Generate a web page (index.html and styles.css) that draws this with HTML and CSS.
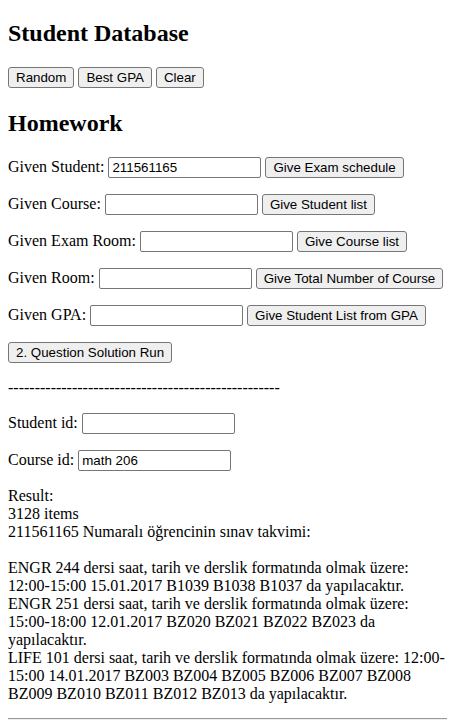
FILE: index.html
```html
<!DOCTYPE html>
<html>
<head>
<meta charset="utf-8">
<title>Student Database</title>
<link rel="stylesheet" href="styles.css">
</head>
<body class="page">
<h2 class="title title-first">Student Database</h2>
<div class="toolbar">
  <button class="btn">Random</button>
  <button class="btn">Best GPA</button>
  <button class="btn">Clear</button>
</div>
<h2 class="title title-second">Homework</h2>
<p class="row">Given Student: <input class="field" type="text" value="211561165"> <button class="btn">Give Exam schedule</button></p>
<p class="row">Given Course: <input class="field" type="text"> <button class="btn">Give Student list</button></p>
<p class="row">Given Exam Room: <input class="field" type="text"> <button class="btn">Give Course list</button></p>
<p class="row">Given Room: <input class="field" type="text"> <button class="btn">Give Total Number of Course</button></p>
<p class="row">Given GPA: <input class="field" type="text"> <button class="btn">Give Student List from GPA</button></p>
<p class="row"><button class="btn">2. Question Solution Run</button></p>
<p class="row row-text">---------------------------------------------------</p>
<p class="row">Student id: <input class="field" type="text"></p>
<p class="row">Course id: <input class="field" type="text" value="math 206"></p>
<div class="result">Result:<br>3128 items<br>211561165 Numaralı öğrencinin sınav takvimi:<br><br>ENGR 244 dersi saat, tarih ve derslik formatında olmak üzere: 12:00-15:00 15.01.2017 B1039 B1038 B1037 da yapılacaktır.<br>ENGR 251 dersi saat, tarih ve derslik formatında olmak üzere: 15:00-18:00 12.01.2017 BZ020 BZ021 BZ022 BZ023 da yapılacaktır.<br>LIFE 101 dersi saat, tarih ve derslik formatında olmak üzere: 12:00-15:00 14.01.2017 BZ003 BZ004 BZ005 BZ006 BZ007 BZ008 BZ009 BZ010 BZ011 BZ012 BZ013 da yapılacaktır.</div>
<hr class="rule">
</body>
</html>
```

FILE: styles.css
```css
html { background: #fff; }
.page {
  margin: 8px;
  width: 439px;
  font-family: "Liberation Serif", "Times New Roman", serif;
  font-size: 16px;
  color: #000;
}
.title {
  font-size: 24px;
  font-weight: bold;
  margin: 19.92px 0;
}
.title-first { margin-top: 12px; }
.title-second { margin-top: 22px; }
.toolbar { margin: 0; }
.row { margin: 16px 0; }
.btn {
  font-family: "Liberation Sans", Arial, sans-serif;
  font-size: 13.333px;
  color: #000;
  background: #efefef;
  border: 1px solid #767676;
  border-radius: 3px;
  padding: 2px 7px;
}
.field {
  font-family: "Liberation Sans", Arial, sans-serif;
  font-size: 13.333px;
  color: #000;
  background: #fff;
  border: 1px solid #767676;
  border-radius: 2px;
  padding: 2px 3px;
  width: 145px;
}
.result { margin: 16px 0 0; }
.rule {
  margin: 15px 0 8px;
  border: 0;
  border-top: 1px solid #9a9a9a;
  border-bottom: 1px solid #eee;
}
```
